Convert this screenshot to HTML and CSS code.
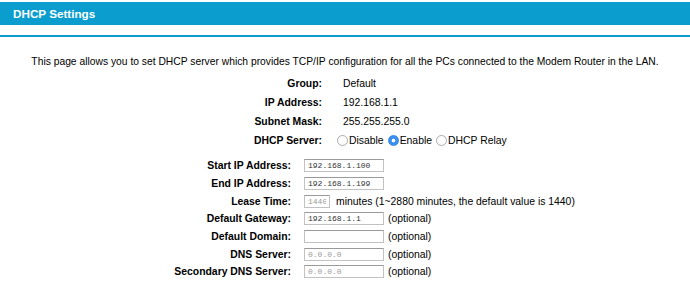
FILE: index.html
```html
<!DOCTYPE html>
<html lang="en">
<head>
  <meta charset="UTF-8">
  <title>DHCP Settings</title>
  <link rel="stylesheet" href="styles.css">
</head>
<body>
  <div class="title-bar">DHCP Settings</div>
  <div class="title-line"></div>

  <p class="intro">This page allows you to set DHCP server which provides TCP/IP configuration for all the PCs connected to the Modem Router in the LAN.</p>

  <div class="info">
    <div class="label">Group:</div>
    <div class="value">Default</div>
    <div class="label">IP Address:</div>
    <div class="value">192.168.1.1</div>
    <div class="label">Subnet Mask:</div>
    <div class="value">255.255.255.0</div>
    <div class="label">DHCP Server:</div>
    <div class="value radios">
      <label><input type="radio" name="dhcp">Disable</label>
      <label><input type="radio" name="dhcp" checked>Enable</label>
      <label><input type="radio" name="dhcp">DHCP Relay</label>
    </div>
  </div>

  <div class="settings">
    <div class="label">Start IP Address:</div>
    <div class="value"><input class="field" type="text" value="192.168.1.100"></div>
    <div class="label">End IP Address:</div>
    <div class="value"><input class="field" type="text" value="192.168.1.199"></div>
    <div class="label">Lease Time:</div>
    <div class="value"><input class="field short dim" type="text" value="1440"><span class="note">minutes (1~2880 minutes, the default value is 1440)</span></div>
    <div class="label">Default Gateway:</div>
    <div class="value"><input class="field" type="text" value="192.168.1.1"><span class="opt">(optional)</span></div>
    <div class="label">Default Domain:</div>
    <div class="value"><input class="field" type="text" value=""><span class="opt">(optional)</span></div>
    <div class="label">DNS Server:</div>
    <div class="value"><input class="field dim" type="text" value="0.0.0.0"><span class="opt">(optional)</span></div>
    <div class="label">Secondary DNS Server:</div>
    <div class="value"><input class="field dim" type="text" value="0.0.0.0"><span class="opt">(optional)</span></div>
  </div>
</body>
</html>
```

FILE: styles.css
```css
body {
  margin: 0;
  font-family: "Liberation Sans", Arial, sans-serif;
  font-size: 10.4px;
  color: #000;
  background: #fff;
}

.title-bar {
  margin-top: 2px;
  height: 23px;
  line-height: 23px;
  padding-left: 13px;
  background-color: #0a9dce;
  color: #fff;
  font-weight: bold;
  font-size: 11.7px;
}

.title-line {
  margin-top: 10px;
  height: 2px;
  background-color: #0a9dce;
}

.intro {
  margin: 18px 0 0;
  line-height: 14px;
  font-size: 10.3px;
  text-align: center;
}

.info,
.settings {
  display: grid;
  align-items: center;
}

.info {
  margin-top: 5px;
  grid-template-columns: 322px auto;
  grid-auto-rows: 19px;
  column-gap: 21px;
}

.settings {
  margin-top: 7px;
  grid-template-columns: 291px auto;
  grid-auto-rows: 17.7px;
  column-gap: 13px;
}

.label {
  text-align: right;
  font-weight: bold;
}

.value {
  display: flex;
  align-items: center;
}

.radios {
  margin-left: -6px;
}

.radios label {
  display: flex;
  align-items: center;
  margin-right: 4px;
}

.radios input {
  appearance: none;
  margin: 0 1px 0 0;
  width: 11px;
  height: 11px;
  border: 1px solid #aaa;
  border-radius: 50%;
  background: #fff;
}

.radios input:checked {
  border-color: #2f86e8;
  background: radial-gradient(circle, #fff 0 1.6px, #3b8ff0 2.2px);
}

.field {
  box-sizing: border-box;
  width: 80px;
  height: 13px;
  margin: 0;
  padding: 0 3px;
  border: 1px solid #c2c2c2;
  border-top-color: #9a9a9a;
  font-family: "Liberation Mono", "Courier New", monospace;
  font-size: 8px;
  color: #333;
}

.field.short {
  width: 26px;
}

.field.dim {
  color: #999;
}

.note {
  margin-left: 6px;
}

.opt {
  margin-left: 4px;
}
```
